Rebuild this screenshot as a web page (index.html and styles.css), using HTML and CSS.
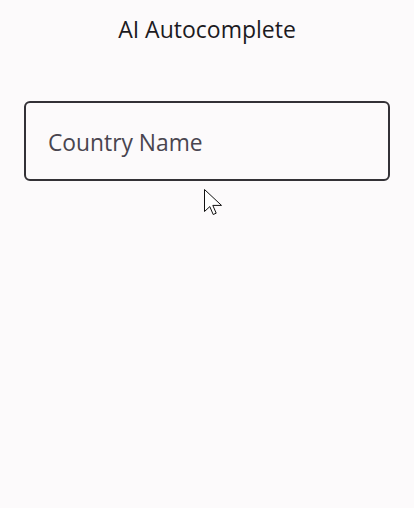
FILE: index.html
```html
<!DOCTYPE html>
<html lang="en">
<head>
<meta charset="utf-8">
<title>AI Autocomplete</title>
<link rel="stylesheet" href="styles.css">
</head>
<body>
<div class="page">
  <header class="title">AI Autocomplete</header>
  <main class="content">
    <div class="field">
      <span class="placeholder">Country Name</span>
    </div>
  </main>
  <svg class="pointer" width="22" height="30" viewBox="0 0 22 30" aria-hidden="true">
    <path d="M1.5 1.5 L1.5 23.5 L6.8 18.6 L10.2 26.5 L13.2 25.2 L9.8 17.4 L18.5 17.4 Z" fill="#ffffff" stroke="#111111" stroke-width="1" stroke-linejoin="miter"/>
  </svg>
</div>
</body>
</html>
```
FILE: styles.css
```css
html, body {
  margin: 0;
  padding: 0;
  background: #fcfafb;
}

body {
  font-family: "Open Sans", "Noto Sans", sans-serif;
  color: #1c1b1f;
}

.page {
  position: relative;
  width: 414px;
  height: 508px;
  overflow: hidden;
}

.title {
  display: flex;
  justify-content: center;
  padding-top: 13px;
  font-size: 23px;
  line-height: 32px;
  color: #1c1b1f;
}

.content {
  padding: 56px 24px 0 24px;
}

.field {
  display: flex;
  align-items: center;
  height: 76px;
  border: 2px solid #333136;
  border-radius: 6px;
  padding: 0 22px;
}

.placeholder {
  font-size: 22.8px;
  color: #49454f;
  padding-top: 2px;
}

.pointer {
  position: absolute;
  left: 203px;
  top: 188px;
}
```
